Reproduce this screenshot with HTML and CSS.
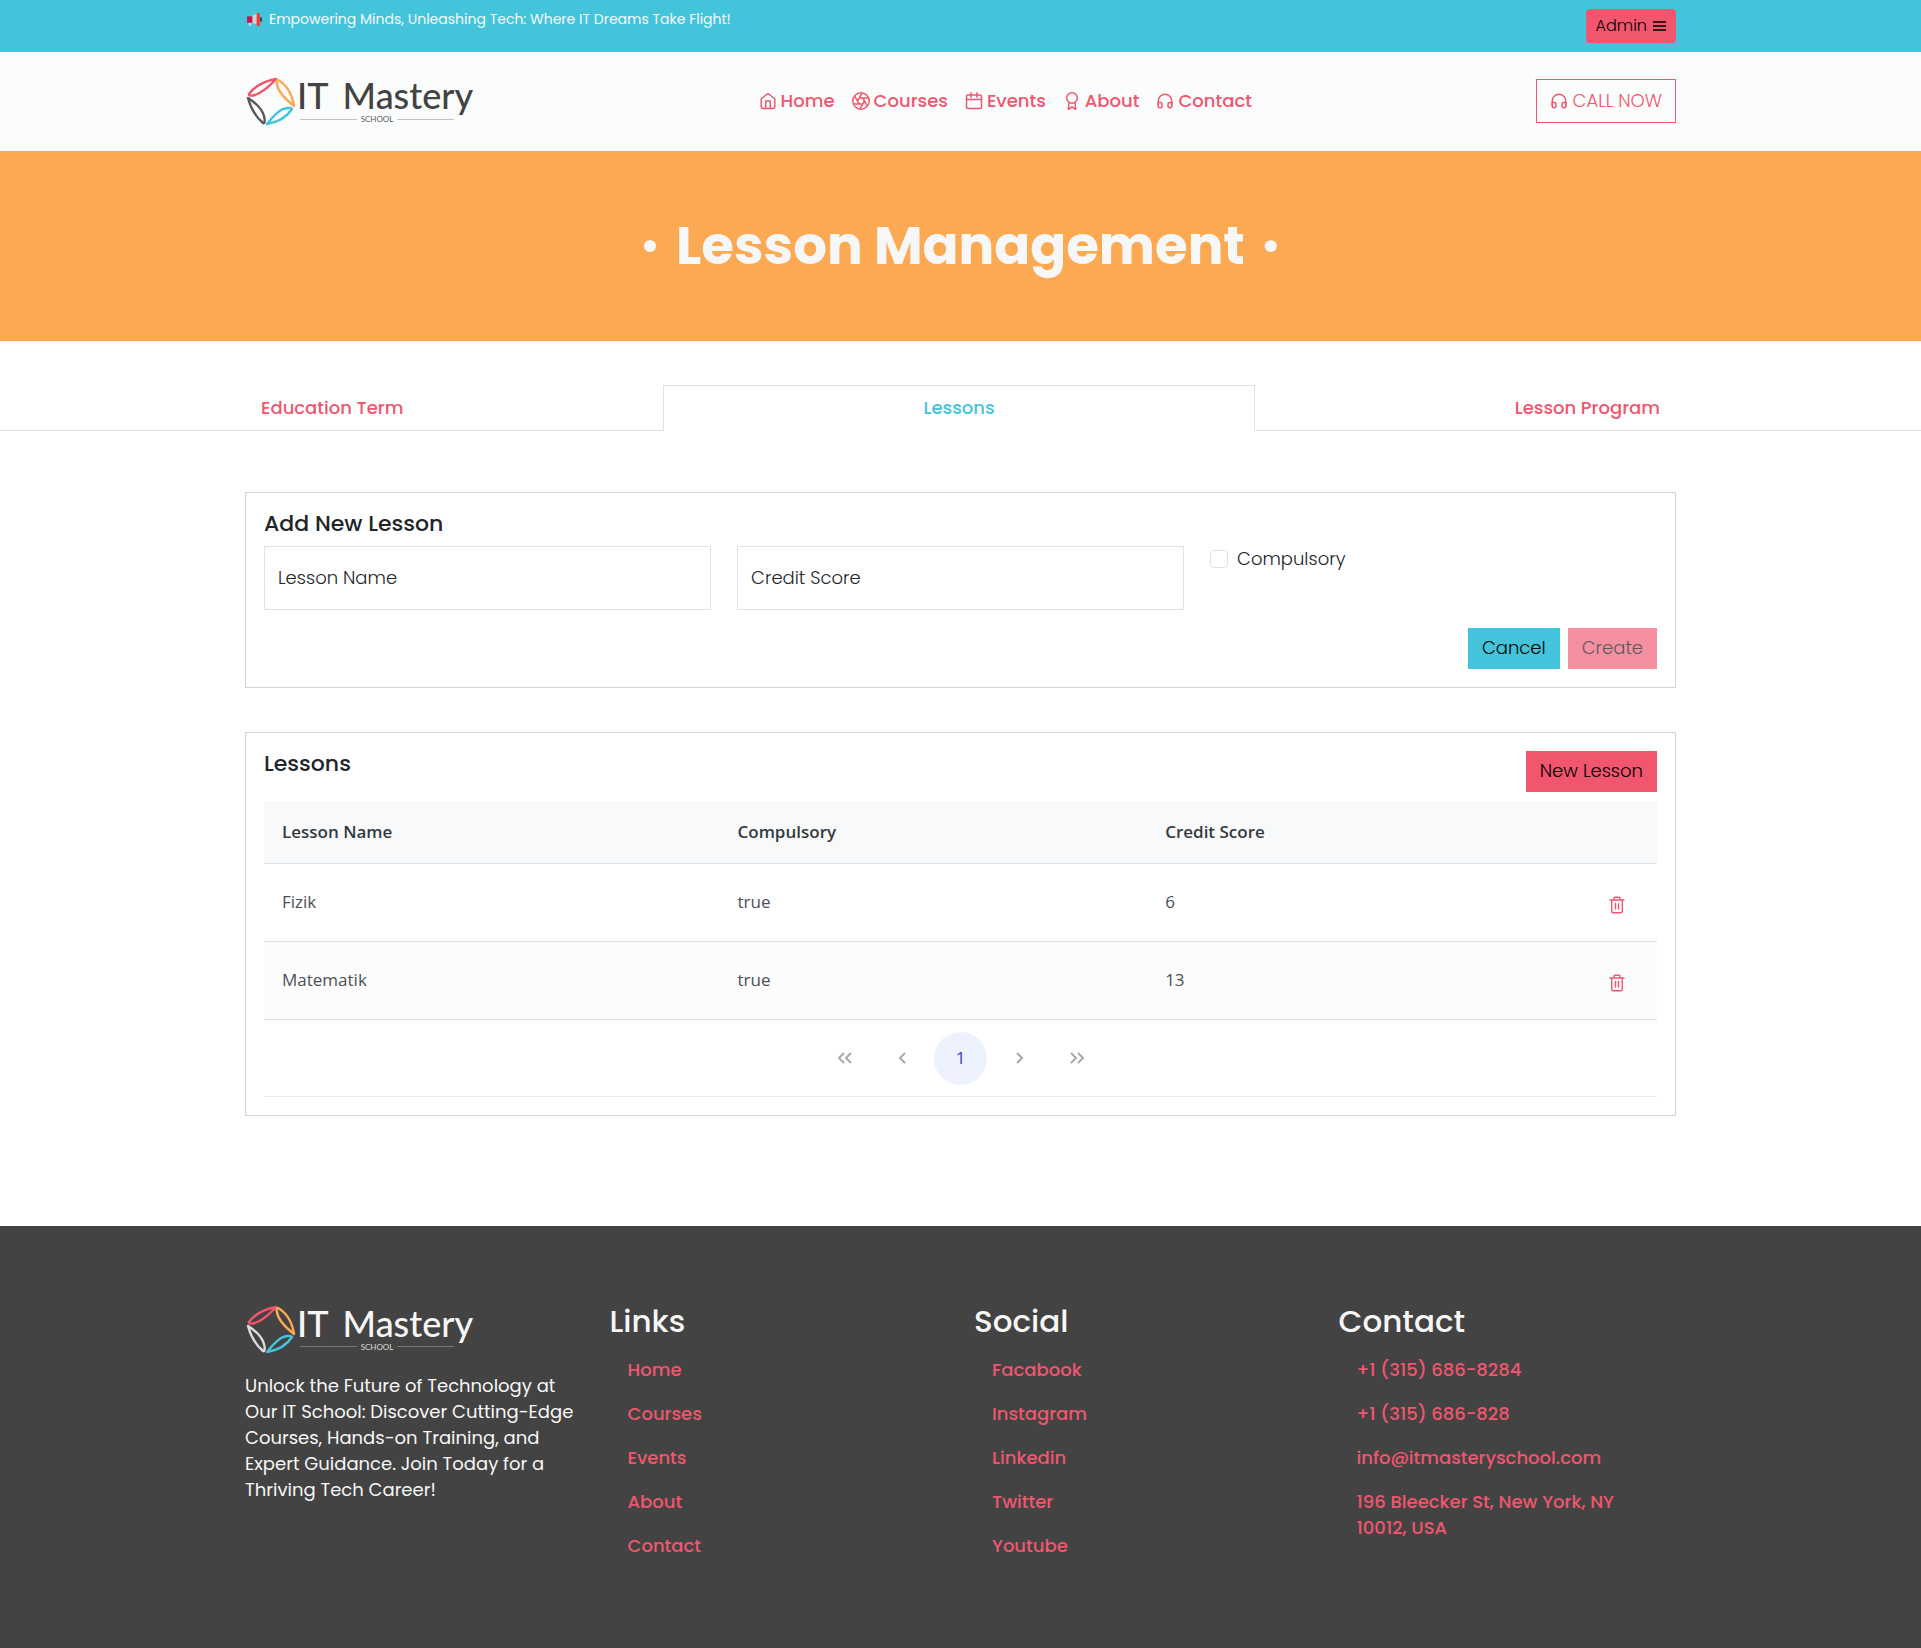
FILE: index.html
```html
<!DOCTYPE html>
<html lang="en">
<head>
<meta charset="utf-8">
<meta name="viewport" content="width=device-width, initial-scale=1">
<title>Lesson Management</title>
<link rel="stylesheet" href="styles.css">
</head>
<body>
<svg class="sprite" aria-hidden="true">
  <symbol id="home" viewBox="0 0 24 24"><path d="M3 9l9-7 9 7v11a2 2 0 0 1-2 2H5a2 2 0 0 1-2-2z"/><path d="M9 22V12h6v10"/></symbol>
  <symbol id="aperture" viewBox="0 0 24 24"><circle cx="12" cy="12" r="11"/><path d="M14.31 8l5.74 9.94M9.69 8h11.48M7.38 12l5.74-9.94M9.69 16L3.95 6.06M14.31 16H2.83M16.62 12l-5.74 9.94"/></symbol>
  <symbol id="calendar" viewBox="0 0 24 24"><rect x="2" y="4" width="20" height="18" rx="2"/><path d="M16 1v6M8 1v6M2 10h20"/></symbol>
  <symbol id="award" viewBox="0 0 24 24"><circle cx="12" cy="8" r="7"/><path d="M8.21 13.89L7 23l5-3 5 3-1.21-9.12"/></symbol>
  <symbol id="headphones" viewBox="0 0 24 24"><path d="M3 18v-6a9 9 0 0 1 18 0v6"/><path d="M21 19a2 2 0 0 1-2 2h-1a2 2 0 0 1-2-2v-3a2 2 0 0 1 2-2h3zM3 19a2 2 0 0 0 2 2h1a2 2 0 0 0 2-2v-3a2 2 0 0 0-2-2H3z"/></symbol>
  <symbol id="trash" viewBox="0 0 18 18"><path d="M2 4h14M3.700 4v11.200a1.500 1.500 0 0 0 1.500 1.500h7.600a1.500 1.500 0 0 0 1.500-1.500V4M6 4V2.300a1 1 0 0 1 1-1h4a1 1 0 0 1 1 1V4M7.500 7.500v5.500M10.500 7.500v5.500"/></symbol>
  <symbol id="leaves" viewBox="0 -1 52 52">
    <g fill="none" stroke-width="2.400" stroke-linejoin="round">
      <path stroke="#f2546d" d="M31 3C20 5 10 10 4 18C3 20 7 20 10 19C18 16 24 11 31 3Z"/>
      <path stroke="#fba953" d="M33 4C42 9 47 18 49 30C40 23 33 16 32 8C31 5 32 4 33 4Z"/>
      <path stroke="#44c4da" d="M22 48C33 46 42 41 47 33C46 31 40 32 36 34C30 38 27 42 22 48Z"/>
      <path stroke="currentColor" d="M3 22C6 33 11 41 18 47C20 48 20 44 19 40C17 33 11 27 3 22Z"/>
    </g>
  </symbol>
</svg>

<div class="topbar">
  <div class="container topbar-row">
    <p class="slogan">
      <svg class="megaphone" viewBox="0 0 16 14" aria-hidden="true"><path fill="#c8d2d8" d="M5 4l6-3v11l-6-2zM2 10h3v3H3z"/><path fill="#c9134f" d="M1 4h5v6H1z"/><path fill="#3b4348" d="M13 5h2v4h-2z"/><path fill="#f8382f" d="M10 1h3v12h-3z"/></svg>
      Empowering Minds, Unleashing Tech: Where IT Dreams Take Flight!
    </p>
    <button class="admin" type="button">Admin
      <svg class="menu-icon" viewBox="0 0 13 12" aria-hidden="true"><path d="M0 2h13M0 6h13M0 10h13"/></svg>
    </button>
  </div>
</div>

<header class="header">
  <div class="container header-row">
    <a class="logo" href="#">
      <svg class="leaves" aria-hidden="true"><use href="#leaves"/></svg>
      <span class="logo-words">
        <span class="logo-name"><span>IT</span><span>Mastery</span></span>
        <span class="logo-sub">SCHOOL</span>
      </span>
    </a>
    <nav class="nav">
      <a href="#"><svg class="icon"><use href="#home"/></svg>Home</a>
      <a href="#"><svg class="icon"><use href="#aperture"/></svg>Courses</a>
      <a href="#"><svg class="icon"><use href="#calendar"/></svg>Events</a>
      <a href="#"><svg class="icon"><use href="#award"/></svg>About</a>
      <a href="#"><svg class="icon"><use href="#headphones"/></svg>Contact</a>
    </nav>
    <a class="call" href="#"><svg class="icon"><use href="#headphones"/></svg>CALL NOW</a>
  </div>
</header>

<section class="banner">
  <h1 class="title"><span class="dot">•</span>Lesson Management<span class="dot">•</span></h1>
</section>

<main>
  <div class="tabs">
    <div class="container tab-row" role="tablist">
      <button class="tab tab-first" type="button" role="tab">Education Term</button>
      <button class="tab tab-active" type="button" role="tab" aria-selected="true">Lessons</button>
      <button class="tab tab-last" type="button" role="tab">Lesson Program</button>
    </div>
  </div>

  <div class="container cards">
    <form class="card">
      <h2 class="card-title">Add New Lesson</h2>
      <div class="fields">
        <div class="field">
          <input id="name" type="text">
          <label for="name">Lesson Name</label>
        </div>
        <div class="field">
          <input id="credit" type="text">
          <label for="credit">Credit Score</label>
        </div>
        <div class="check">
          <input id="compulsory" type="checkbox">
          <label for="compulsory">Compulsory</label>
        </div>
      </div>
      <div class="actions">
        <button class="btn btn-cyan" type="button">Cancel</button>
        <button class="btn btn-pink" type="submit" disabled>Create</button>
      </div>
    </form>

    <section class="card">
      <div class="card-head">
        <h2 class="card-title">Lessons</h2>
        <button class="btn btn-pink" type="button">New Lesson</button>
      </div>
      <table class="table">
        <thead>
          <tr><th class="col-name">Lesson Name</th><th class="col-comp">Compulsory</th><th>Credit Score</th><th></th></tr>
        </thead>
        <tbody>
          <tr><td>Fizik</td><td>true</td><td>6</td><td class="cell-action"><button class="trash" type="button" aria-label="Delete Fizik"><svg class="icon"><use href="#trash"/></svg></button></td></tr>
          <tr><td>Matematik</td><td>true</td><td>13</td><td class="cell-action"><button class="trash" type="button" aria-label="Delete Matematik"><svg class="icon"><use href="#trash"/></svg></button></td></tr>
        </tbody>
      </table>
      <div class="pager">
        <button type="button" aria-label="First page"><svg class="chev" viewBox="0 0 16 12"><path d="M7 1L2 6l5 5M14 1L9 6l5 5"/></svg></button>
        <button type="button" aria-label="Previous page"><svg class="chev" viewBox="0 0 16 12"><path d="M10 1L5 6l5 5"/></svg></button>
        <button class="page-current" type="button">1</button>
        <button type="button" aria-label="Next page"><svg class="chev" viewBox="0 0 16 12"><path d="M6 1l5 5-5 5"/></svg></button>
        <button type="button" aria-label="Last page"><svg class="chev" viewBox="0 0 16 12"><path d="M2 1l5 5-5 5M9 1l5 5-5 5"/></svg></button>
      </div>
    </section>
  </div>
</main>

<footer class="footer">
  <div class="container footer-grid">
    <div>
      <a class="logo logo-light" href="#">
        <svg class="leaves" aria-hidden="true"><use href="#leaves"/></svg>
        <span class="logo-words">
          <span class="logo-name"><span>IT</span><span>Mastery</span></span>
          <span class="logo-sub">SCHOOL</span>
        </span>
      </a>
      <p class="about">Unlock the Future of Technology at<br>Our IT School: Discover Cutting-Edge<br>Courses, Hands-on Training, and<br>Expert Guidance. Join Today for a<br>Thriving Tech Career!</p>
    </div>
    <div>
      <h3>Links</h3>
      <ul class="links">
        <li><a href="#">Home</a></li><li><a href="#">Courses</a></li><li><a href="#">Events</a></li><li><a href="#">About</a></li><li><a href="#">Contact</a></li>
      </ul>
    </div>
    <div>
      <h3>Social</h3>
      <ul class="links">
        <li><a href="#">Facabook</a></li><li><a href="#">Instagram</a></li><li><a href="#">Linkedin</a></li><li><a href="#">Twitter</a></li><li><a href="#">Youtube</a></li>
      </ul>
    </div>
    <div>
      <h3>Contact</h3>
      <ul class="links">
        <li><a href="#">+1 (315) 686-8284</a></li><li><a href="#">+1 (315) 686-828</a></li><li><a href="#">info@itmasteryschool.com</a></li><li><a href="#">196 Bleecker St, New York, NY<br>10012, USA</a></li>
      </ul>
    </div>
  </div>
</footer>
</body>
</html>
```
FILE: styles.css
```css
:root {
  --pink: #f0566e;
  --cyan: #44c4da;
  --orange: #fba953;
  --dark: #434343;
  --line: #dee2e6;
}
* { box-sizing: border-box; }
body {
  margin: 0;
  background: var(--dark);
  color: #212529;
  font: 300 18px/26px Poppins, Inter, sans-serif;
}
h1, h2, h3, p, ul { margin: 0; padding: 0; }
a { color: var(--pink); text-decoration: none; }
button, input { font: inherit; }
svg { display: block; }
.sprite { position: absolute; width: 0; height: 0; }
.container { width: 100%; max-width: 1431px; margin: 0 auto; }
.icon {
  width: 18px; height: 18px; flex: none;
  fill: none; stroke: currentColor; stroke-width: 2;
  stroke-linecap: round; stroke-linejoin: round;
}

.topbar { background: var(--cyan); }
.topbar-row { display: flex; justify-content: space-between; align-items: flex-start; padding: 9px 0; }
.slogan { display: flex; align-items: center; gap: 6px; padding-left: 1px; font-size: 14px; line-height: 20px; font-weight: 400; color: #f7f7f7; }
.megaphone { width: 17px; height: 15px; }
.admin {
  display: flex; align-items: center; gap: 6px; height: 34px; padding: 0 10px;
  border: 0; border-radius: 4px; background: var(--pink); color: #000; font-size: 16px;
}
.menu-icon { width: 13px; height: 12px; stroke: #000; stroke-width: 1.5; }

.header { background: #fbfdfc; }
.header-row { display: flex; justify-content: space-between; align-items: center; padding: 23px 0 24px; }
.logo { display: flex; width: 230px; height: 52px; color: #5a5a5a; }
.leaves { width: 52px; height: 52px; flex: none; }
.logo-words { display: block; font-family: Lato, sans-serif; }
.logo-name { display: flex; gap: 14px; font-size: 36px; line-height: 40px; font-weight: 500; color: #434343; }
.logo-sub { display: flex; align-items: center; gap: 4px; width: 154px; margin-left: 3px; font-size: 8px; line-height: 8px; font-weight: 400; }
.logo-sub::before, .logo-sub::after { content: ""; flex: 1; height: 1px; background: currentColor; opacity: .35; }
.logo-light { color: #dcdcdc; }
.logo-light .logo-name { color: #f7f7f7; }
.nav { display: flex; gap: 17px; font-weight: 500; }
.nav a { display: flex; align-items: center; gap: 4px; }
.call { display: flex; align-items: center; gap: 5px; height: 44px; padding: 0 13px; border: 1px solid var(--pink); }

.banner { background: var(--orange); padding: 59px 0; }
.title {
  display: flex; justify-content: center; gap: 16px;
  color: #f7f7f7; font-size: 53px; line-height: 72px; font-weight: 700;
}
.dot { font-weight: 400; font-size: 48px; }

main { background: #fff; padding: 44px 0 110px; }
.tabs { border-bottom: 1px solid var(--line); }
.tab-row { display: grid; grid-template-columns: 418fr 592fr 421fr; margin-bottom: -1px; }
.tab {
  height: 46px; padding: 0 15px; border: 1px solid transparent; background: none;
  color: var(--pink); font-weight: 500;
}
.tab-first { text-align: left; }
.tab-last { text-align: right; }
.tab-active { color: var(--cyan); background: #fff; border-color: var(--line) var(--line) #fff; }

.cards { display: grid; gap: 44px; padding-top: 61px; }
.card { border: 1px solid #d2d3d4; padding: 18px; }
.card-title { font-size: 22px; line-height: 26px; font-weight: 500; }
.fields { display: grid; grid-template-columns: repeat(3, 1fr); gap: 26px; margin-top: 9px; }
.field { display: grid; }
.field > * { grid-area: 1 / 1; }
.field input { width: 100%; height: 64px; padding: 0 13px; border: 1px solid var(--line); background: #fff; }
.field label { align-self: center; justify-self: start; padding-left: 14px; pointer-events: none; }
.check { display: flex; align-items: center; align-self: start; gap: 9px; }
.check input { appearance: none; width: 18px; height: 18px; margin: 0; border: 1px solid var(--line); border-radius: 4px; background: #fff; }
.actions { display: flex; justify-content: flex-end; gap: 8px; margin-top: 18px; }
.btn { height: 41px; padding: 0 14px 2px; border: 0; color: #000; }
.btn-cyan { background: var(--cyan); }
.btn-pink { background: var(--pink); }
.btn:disabled { opacity: .65; }

.card-head { display: flex; justify-content: space-between; align-items: flex-start; margin-bottom: 9px; }
.table { width: 100%; table-layout: fixed; border-collapse: collapse; font: 400 17px/26px "Segoe UI", "Open Sans", sans-serif; color: #495057; }
.table th { height: 62px; padding: 0 18px; text-align: left; font-weight: 600; color: #343a40; background: #f8f9fa; border-bottom: 1px solid var(--line); }
.table td { height: 78px; padding: 0 18px; border-bottom: 1px solid var(--line); }
.table tbody tr:nth-child(2) { background: #fcfcfc; }
.table .col-name { width: 32.7%; }
.table .col-comp { width: 30.7%; }
.table .cell-action { text-align: right; }
.trash { padding: 4px 13px 0; border: 0; background: none; color: var(--pink); vertical-align: middle; }
.trash .icon { stroke-width: 1.4; }
.pager { display: flex; justify-content: center; gap: 5px; padding: 12px 0 11px; border-bottom: 1px solid #e9ecef; }
.pager button { display: grid; place-items: center; width: 53px; height: 53px; padding: 0; border: 0; border-radius: 50%; background: none; font: 400 17px/26px "Segoe UI", "Open Sans", sans-serif; }
.pager .page-current { background: #eef2ff; color: #4338ca; }
.chev { width: 16px; height: 12px; fill: none; stroke: #a5a9ad; stroke-width: 2; }

.footer { background: var(--dark); padding: 77px 0 71px; color: #f7f7f7; }
.footer-grid { display: grid; grid-template-columns: repeat(4, 1fr); gap: 27px; }
.about { margin-top: 18px; font-weight: 400; white-space: nowrap; }
.footer h3 { font-size: 31px; line-height: 36px; font-weight: 500; }
.links { list-style: none; padding: 9px 18px 0; font-weight: 500; }
.links a { display: block; padding: 9px 0; white-space: nowrap; }
```
